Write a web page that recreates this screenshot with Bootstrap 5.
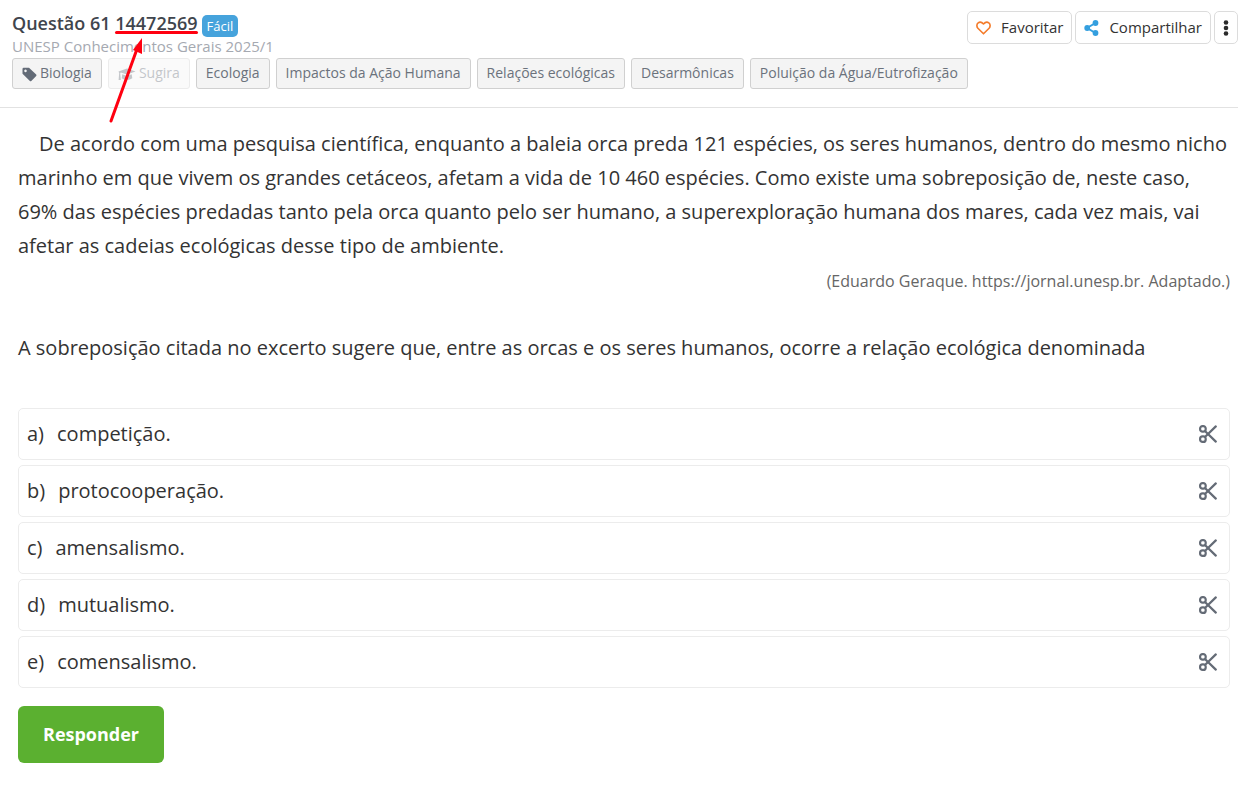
<!DOCTYPE html>
<html lang="pt-BR">
<head>
<meta charset="utf-8">
<meta name="viewport" content="width=device-width, initial-scale=1">
<title>Questão 61</title>
<link href="https://cdn.jsdelivr.net/npm/bootstrap@5.3.0/dist/css/bootstrap.min.css" rel="stylesheet">
<style>
  body { font-family: "Open Sans", "Noto Sans", sans-serif; color: #333; background: #fff; }
  .q-header { padding: 11px 0 18px 12px; border-bottom: 1px solid #e2e2e2; }
  .q-title { font-size: 18px; line-height: 24px; font-weight: 600; color: #3f454d; }
  .q-code { display: inline-block; position: relative; }
  .q-underline { position: absolute; left: 0; top: 20px; width: 100%; height: 3px; border-radius: 2px; background: #ff0010; }
  .q-arrow { position: absolute; left: -7px; top: 26px; pointer-events: none; z-index: 2; }
  .q-level { font-size: 13px; line-height: 22px; font-weight: 400; margin-top: 4px; padding: 0 5px; border-radius: 5px; background: #46a3dc; }
  .q-exam { font-size: 15px; line-height: 18px; margin-bottom: 3px; color: #a5a9b1; }
  .q-tags { gap: 6px; }
  .q-tag { --bs-btn-disabled-opacity: .4; font-size: 14px; line-height: 21px; padding: 3px 9px 5px; color: #6b727c; background: #f4f4f4; border: 1px solid #d0d0d0; border-radius: 3px; }
  .q-tag:disabled { color: #6b727c; background: #f4f4f4; border-color: #d0d0d0; }
  .q-tag svg { margin-right: 3px; }
  .q-actions { gap: 3px; }
  .q-action { gap: 10px; font-size: 15px; line-height: 23px; padding: 4px 8px; color: #333; background: #fff; border: 1px solid #dcdcdc; border-radius: 5px; }
  .q-body { padding: 19px 8px 23px 18px; }
  .q-text { font-size: 20px; line-height: 34px; }
  .q-lead { text-indent: 21px; }
  .q-source { font-size: 16px; line-height: 36px; margin-bottom: 32px; color: #666; }
  .q-options { gap: 5px; margin-top: 43px; }
  .q-option { min-height: 52px; padding: 0 12px 0 8px; border: 1px solid #ececec; border-radius: 5px; font-size: 20px; }
  .q-option label { cursor: pointer; }
  .q-letter { margin-right: 13px; }
  .q-cut { color: #646b76; line-height: 0; }
  .q-submit { margin-top: 18px; padding: 14px 25px; font-size: 18px; line-height: 29px; font-weight: 700; color: #fff; background: #5bb030; border: 0; border-radius: 6px; }
  .q-submit:hover { color: #fff; background: #4f9c29; }
</style>
</head>
<body>
<svg class="d-none" xmlns="http://www.w3.org/2000/svg">
  <symbol id="cut" viewBox="0 0 18 18">
    <g fill="none" stroke="currentColor" stroke-width="2.200" stroke-linecap="round">
      <rect x="1.100" y="1.100" width="5.600" height="5.600" rx="2.500"/><rect x="1.100" y="11.300" width="5.600" height="5.600" rx="2.500"/>
      <path d="M6.200 6.200 16.800 16.600M6.200 11.800 16.800 1.400"/>
    </g>
  </symbol>
</svg>

<header class="q-header">
  <div class="d-flex justify-content-between align-items-start">
    <div>
      <div class="d-flex align-items-start gap-1">
        <h1 class="q-title mb-0">Questão 61 <span class="q-code">14472569<span class="q-underline"></span><svg class="q-arrow" width="40" height="88" viewBox="0 0 40 88" aria-hidden="true"><path d="M3 84 29 12" stroke="#ff0010" stroke-width="3" stroke-linecap="round"/><path d="M34 1 34 17 25 13Z" fill="#ff0010"/></svg></span></h1>
        <span class="badge q-level">Fácil</span>
      </div>
      <div class="q-exam">UNESP Conhecimentos Gerais 2025/1</div>
    </div>
    <div class="d-flex q-actions">
      <button type="button" class="btn q-action d-flex align-items-center">
        <svg width="15" height="14" viewBox="0 0 15 14" aria-hidden="true"><path d="M7.500 12.800 1.900 7.200C.4 5.600.6 3 2.200 1.800 3.800.6 5.800 1 7.500 3 9.200 1 11.200.6 12.800 1.800 14.400 3 14.600 5.600 13.100 7.200Z" fill="none" stroke="#f47b2a" stroke-width="1.600" stroke-linejoin="round"/></svg>
        <span>Favoritar</span>
      </button>
      <button type="button" class="btn q-action d-flex align-items-center">
        <svg width="15" height="16" viewBox="0 0 15 16" aria-hidden="true"><path d="M11.500 3 3 8l8.500 5" fill="none" stroke="#349fdf" stroke-width="2"/><g fill="#349fdf"><circle cx="11.500" cy="3" r="2.900"/><circle cx="3.200" cy="8" r="2.900"/><circle cx="11.500" cy="13" r="2.900"/></g></svg>
        <span>Compartilhar</span>
      </button>
      <button type="button" class="btn q-action d-flex align-items-center" aria-label="Mais opções">
        <svg width="6" height="16" viewBox="0 0 6 16" aria-hidden="true"><g fill="#2b2b2b"><circle cx="3" cy="2.500" r="2.300"/><circle cx="3" cy="8" r="2.300"/><circle cx="3" cy="13.500" r="2.300"/></g></svg>
      </button>
    </div>
  </div>
  <div class="d-flex flex-wrap q-tags">
    <button type="button" class="btn q-tag"><svg width="15" height="15" viewBox="0 0 15 15" aria-hidden="true"><path d="M.5 2Q.5.8 1.700.8H7L14.200 7.600Q14.800 8.300 14.200 9L9.300 14Q8.600 14.600 7.900 14L.5 6.700ZM3.500 2.600a1.300 1.300 0 1 0 .01 0Z" fill="#636b77" fill-rule="evenodd"/></svg>Biologia</button>
    <button type="button" class="btn q-tag" disabled><svg width="18" height="13" viewBox="0 0 18 13" aria-hidden="true"><path d="M9 .5 17.500 3.500 9 6.600 2.800 4.400 2.200 5.200 2.800 12H.6L1.200 5 .5 3.500ZM4.300 6.200 9 7.900l4.700-1.700.6 4Q12 12 9 12t-5.300-1.800Z" fill="#6b727c"/></svg>Sugira</button>
    <button type="button" class="btn q-tag">Ecologia</button>
    <button type="button" class="btn q-tag">Impactos da Ação Humana</button>
    <button type="button" class="btn q-tag">Relações ecológicas</button>
    <button type="button" class="btn q-tag">Desarmônicas</button>
    <button type="button" class="btn q-tag">Poluição da Água/Eutrofização</button>
  </div>
</header>

<main class="q-body">
  <p class="q-text q-lead mb-0">De acordo com uma pesquisa científica, enquanto a baleia orca preda 121 espécies, os seres humanos, dentro do mesmo nicho marinho em que vivem os grandes cetáceos, afetam a vida de 10 460 espécies. Como existe uma sobreposição de, neste caso, 69% das espécies predadas tanto pela orca quanto pelo ser humano, a superexploração humana dos mares, cada vez mais, vai afetar as cadeias ecológicas desse tipo de ambiente.</p>
  <p class="q-source text-end">(Eduardo Geraque. https://jornal.unesp.br. Adaptado.)</p>
  <p class="q-text mb-0">A sobreposição citada no excerto sugere que, entre as orcas e os seres humanos, ocorre a relação ecológica denominada</p>

  <form>
    <div class="q-options d-flex flex-column">
      <div class="q-option d-flex align-items-center"><input class="visually-hidden" type="radio" name="resp" id="oa"><label for="oa" class="flex-grow-1"><span class="q-letter">a)</span>competição.</label><button type="button" class="btn border-0 p-0 q-cut" aria-label="Eliminar a"><svg width="18" height="18"><use href="#cut"/></svg></button></div>
      <div class="q-option d-flex align-items-center"><input class="visually-hidden" type="radio" name="resp" id="ob"><label for="ob" class="flex-grow-1"><span class="q-letter">b)</span>protocooperação.</label><button type="button" class="btn border-0 p-0 q-cut" aria-label="Eliminar b"><svg width="18" height="18"><use href="#cut"/></svg></button></div>
      <div class="q-option d-flex align-items-center"><input class="visually-hidden" type="radio" name="resp" id="oc"><label for="oc" class="flex-grow-1"><span class="q-letter">c)</span>amensalismo.</label><button type="button" class="btn border-0 p-0 q-cut" aria-label="Eliminar c"><svg width="18" height="18"><use href="#cut"/></svg></button></div>
      <div class="q-option d-flex align-items-center"><input class="visually-hidden" type="radio" name="resp" id="od"><label for="od" class="flex-grow-1"><span class="q-letter">d)</span>mutualismo.</label><button type="button" class="btn border-0 p-0 q-cut" aria-label="Eliminar d"><svg width="18" height="18"><use href="#cut"/></svg></button></div>
      <div class="q-option d-flex align-items-center"><input class="visually-hidden" type="radio" name="resp" id="oe"><label for="oe" class="flex-grow-1"><span class="q-letter">e)</span>comensalismo.</label><button type="button" class="btn border-0 p-0 q-cut" aria-label="Eliminar e"><svg width="18" height="18"><use href="#cut"/></svg></button></div>
    </div>
    <button type="submit" class="btn q-submit">Responder</button>
  </form>
</main>
<script src="https://cdn.jsdelivr.net/npm/bootstrap@5.3.0/dist/js/bootstrap.bundle.min.js"></script>
</body>
</html>
